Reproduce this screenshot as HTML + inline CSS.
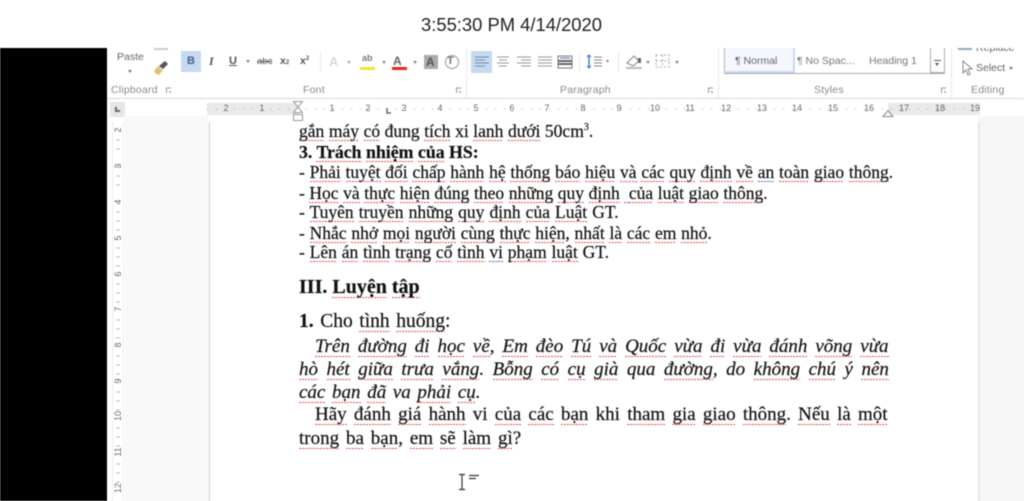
<!DOCTYPE html>
<html lang="vi"><head><meta charset="utf-8"><title>Screen</title>
<style>
html,body{margin:0;padding:0;width:1024px;height:501px;overflow:hidden;background:#fff}
#w{position:relative;width:1024px;height:501px;overflow:hidden;background:#fff;filter:blur(.5px)}
#w div,#w span.a,#w svg{position:absolute}
.s{font-family:"Liberation Sans",sans-serif;white-space:nowrap;color:#666}
.l{font-family:"Liberation Sans",sans-serif;font-size:10.5px;color:#8a8a8a;white-space:nowrap;letter-spacing:.2px}
.t{font-family:"Liberation Serif",serif;font-size:17.5px;line-height:20px;color:#111;white-space:nowrap;left:299px;-webkit-text-stroke:.2px #111}
.t u{text-decoration:none;background:repeating-linear-gradient(90deg,#e2504e 0 2px,transparent 2px 3px) 0 100%/100% 1px no-repeat}
.t u.b{background:repeating-linear-gradient(90deg,#4a6fd0 0 2px,transparent 2px 3px) 0 100%/100% 1px no-repeat}
.r{font-family:"Liberation Sans",sans-serif;font-size:9px;color:#666;width:16px;text-align:center;top:103px}
.v{font-family:"Liberation Sans",sans-serif;font-size:9px;color:#666;left:110px;width:16px;text-align:center;transform:rotate(-90deg)}
.sep{width:1px;background:#e8e8e8}
</style></head><body><div id="w">
<div style="left:421px;top:14px;font:18.4px 'Liberation Sans',sans-serif;color:#222;white-space:nowrap">3:55:30 PM 4/14/2020</div>

<div style="left:0;top:48px;width:107px;height:453px;background:#000"></div>
<div style="left:125px;top:116px;width:84px;height:385px;background:#f9f8f9"></div>
<div style="left:209px;top:122px;width:1px;height:379px;background:#cfcfcf"></div>
<div style="left:978px;top:116px;width:46px;height:385px;background:#f7f7f7"></div>
<div style="left:978px;top:122px;width:2px;height:379px;background:#e6e6e6"></div>

<!-- ribbon -->
<div class="s" style="left:117px;top:51px;font-size:10.5px">Paste</div>
<div style="left:128px;top:70px;width:0;height:0;border:2px solid transparent;border-top:3px solid #777"></div>
<div style="left:154px;top:48px;width:14px;height:2px;background:#ccc"></div>
<svg style="left:153px;top:60px" width="16" height="15" viewBox="0 0 16 15"><path d="M1 11 L5 6 L10 10 L6 15 L3 14Z" fill="#dfc078"/><path d="M6 6 L12 1 L15 4 L10 9Z" fill="#555"/></svg>
<div style="left:181px;top:51px;width:20px;height:21px;background:#c5d9f1"></div>
<div class="s" style="left:187px;top:55px;font:bold 11px 'Liberation Sans',sans-serif;color:#44618a">B</div>
<div class="s" style="left:209px;top:54px;font:italic bold 12px 'Liberation Serif',serif;color:#555">I</div>
<div class="s" style="left:229px;top:55px;font:bold 11px 'Liberation Sans',sans-serif;color:#555;text-decoration:underline">U</div>
<div style="left:246px;top:60px;width:0;height:0;border:2px solid transparent;border-top:3px solid #888"></div>
<div class="s" style="left:257px;top:56px;font-size:9.5px;color:#555;text-decoration:line-through">abc</div>
<div class="s" style="left:280px;top:55px;font:bold 10.5px 'Liberation Sans',sans-serif;color:#555">x<span style="font-size:6px">2</span></div>
<div class="s" style="left:300px;top:55px;font:bold 10.5px 'Liberation Sans',sans-serif;color:#555">x<span style="font-size:6px;vertical-align:4px">2</span></div>
<div class="sep" style="left:320px;top:52px;height:20px"></div>
<div class="s" style="left:329px;top:54px;font:bold 13px 'Liberation Sans',sans-serif;color:#d8d8d8">A</div>
<div style="left:347px;top:61px;width:0;height:0;border:2px solid transparent;border-top:3px solid #aaa"></div>
<div class="s" style="left:362px;top:53px;font:bold 9px 'Liberation Sans',sans-serif;color:#777">ab</div>
<div style="left:360px;top:67px;width:15px;height:3px;background:#f2e33a"></div>
<div style="left:382px;top:61px;width:0;height:0;border:2px solid transparent;border-top:3px solid #888"></div>
<div class="s" style="left:393px;top:54px;font:bold 12px 'Liberation Sans',sans-serif;color:#666">A</div>
<div style="left:392px;top:67px;width:15px;height:3px;background:#e02a20"></div>
<div style="left:413px;top:61px;width:0;height:0;border:2px solid transparent;border-top:3px solid #888"></div>
<div style="left:424px;top:55px;width:14px;height:14px;background:#aaa"></div>
<div class="s" style="left:426px;top:55px;font:bold 12px 'Liberation Sans',sans-serif;color:#555">A</div>
<div style="left:445px;top:55px;width:12px;height:12px;border:1px solid #999;border-radius:50%"></div>
<div class="s" style="left:447px;top:55px;font:bold 11px 'Liberation Sans',sans-serif;color:#777">T</div>

<div class="sep" style="left:466px;top:48px;height:50px"></div>
<div style="left:471px;top:51px;width:21px;height:22px;background:#c5d9f1"></div>
<svg style="left:474px;top:55px" width="108" height="14" viewBox="0 0 108 14" stroke="#999" fill="none"><path d="M1 2H15M1 5H11M1 8H15M1 11H11" stroke="#7d8ca3"/><path d="M23 2H35M25 5H33M23 8H35M25 11H33"/><path d="M43 2H57M47 5H57M43 8H57M47 11H57"/><path d="M64 2H78M64 5H78M64 8H78M64 11H78"/><path d="M84 1H98V13H84Z" stroke="#777"/><path d="M84 6H98M84 9H98" stroke="#666" stroke-width="2"/><path d="M86 3H96" stroke="#3a75c4"/></svg>
<div class="sep" style="left:579px;top:52px;height:20px"></div>
<svg style="left:586px;top:54px" width="28" height="16" viewBox="0 0 28 16" fill="none"><path d="M3 1V14" stroke="#3f7fc9" stroke-width="1.5"/><path d="M1 3L3 1L5 3M1 12L3 14L5 12" stroke="#3f7fc9"/><path d="M8 3H16M8 6H16M8 9H16M8 12H16" stroke="#888"/><path d="M20 6L23 6L21.500 9Z" fill="#888"/></svg>
<div class="sep" style="left:618px;top:52px;height:20px"></div>
<svg style="left:625px;top:53px" width="60" height="18" viewBox="0 0 60 18" fill="none"><path d="M2 10L9 3L14 8L8 13Z" stroke="#888"/><path d="M13 5h3v5h-3z" fill="#666"/><path d="M1 15H17" stroke="#bbb" stroke-width="2"/><path d="M21 8L25 8L23 11Z" fill="#888"/><path d="M31 2H44V14H31ZM31 8H44M37.500 2V14" stroke="#aaa" stroke-dasharray="2 2"/><path d="M50 8L54 8L52 11Z" fill="#888"/></svg>
<div class="sep" style="left:718px;top:48px;height:50px"></div>

<div style="left:724px;top:48px;width:220px;height:25px;border-bottom:1px solid #aaa;border-left:1px solid #aab"></div>
<div style="left:726px;top:48px;width:67px;height:23px;border-right:2px solid #c9d9f2;border-bottom:2px solid #c9d9f2;background:#f4f7fd"></div>
<div class="s" style="left:735px;top:55px;font-size:10.5px;color:#666">¶ Normal</div>
<div class="s" style="left:797px;top:55px;font-size:10.5px;color:#777">¶ No Spac...</div>
<div class="s" style="left:869px;top:55px;font-size:10.5px;color:#777">Heading 1</div>
<div style="left:930px;top:48px;width:15px;height:25px;border:1px solid #aaa;border-top:0;box-sizing:border-box"></div>
<div style="left:934px;top:60px;width:7px;height:1px;background:#555"></div>
<div style="left:935px;top:63px;width:0;height:0;border:2.500px solid transparent;border-top:3px solid #555"></div>
<div class="sep" style="left:951px;top:48px;height:50px"></div>

<div style="left:976px;top:48px;width:48px;height:5px;overflow:hidden"><div class="s" style="left:0;top:-6px;font-size:10.5px">Replace</div></div>
<div style="left:958px;top:48px;width:14px;height:2px;background:#8ea6c9"></div>
<svg style="left:961px;top:60px" width="13" height="16" viewBox="0 0 13 16"><path d="M2 1V13L5 10L7 15L9 14L7 9L11 9Z" fill="#fff" stroke="#888"/></svg>
<div class="s" style="left:976px;top:62px;font-size:10.5px;color:#666">Select</div>
<div style="left:1009px;top:67px;width:0;height:0;border:2px solid transparent;border-top:3px solid #777"></div>

<div class="l" style="left:111px;top:84px">Clipboard</div>
<div class="l" style="left:303px;top:84px">Font</div>
<div class="l" style="left:560px;top:84px">Paragraph</div>
<div class="l" style="left:814px;top:84px">Styles</div>
<div class="l" style="left:971px;top:84px">Editing</div>
<svg style="left:0;top:0" width="1024" height="100" fill="none" stroke="#999"><path d="M166.500 93V88H171M169 91L171 93M456.500 93V88H461M459 91L461 93M708.500 93V88H713M711 91L713 93M941.500 93V88H946M944 91L946 93"/></svg>
<div style="left:107px;top:98px;width:917px;height:1px;background:#d8d8d8"></div>

<!-- horizontal ruler -->
<div style="left:110px;top:102px;width:15px;height:15px;background:#e6e6e6"></div>
<div style="left:115px;top:107px;width:2px;height:5px;background:#666"></div><div style="left:115px;top:110px;width:5px;height:2px;background:#666"></div>
<div style="left:207px;top:103px;width:91px;height:12px;background:#e9e9e9"></div>
<div style="left:888px;top:103px;width:92px;height:12px;background:#e9e9e9"></div>
<div class="r" style="left:218px">2</div><div class="r" style="left:254px">1</div>
<div class="r" style="left:324px">1</div><div class="r" style="left:360px">2</div><div class="r" style="left:396px">3</div><div class="r" style="left:432px">4</div><div class="r" style="left:468px">5</div><div class="r" style="left:504px">6</div><div class="r" style="left:539px">7</div><div class="r" style="left:575px">8</div><div class="r" style="left:611px">9</div><div class="r" style="left:647px">10</div><div class="r" style="left:682px">11</div><div class="r" style="left:718px">12</div><div class="r" style="left:754px">13</div><div class="r" style="left:789px">14</div><div class="r" style="left:825px">15</div><div class="r" style="left:861px">16</div><div class="r" style="left:896px">17</div><div class="r" style="left:932px">18</div><div class="r" style="left:967px">19</div>
<svg style="left:0;top:98px" width="1024" height="26" fill="none"><path d="M207 11H980" stroke="#aaa" stroke-dasharray="1 8"/><path d="M293.500 3.500H302.500L298 9L302.500 14.500H293.500L298 9Z" fill="#fff" stroke="#999"/><rect x="293.500" y="16.500" width="9" height="6" fill="#fff" stroke="#999"/><path d="M883 18.500L888 12.500L893 18.500Z" fill="#fff" stroke="#888"/><path d="M387 10V15H391" stroke="#666" stroke-width="1.500"/></svg>

<!-- vertical ruler -->
<div style="left:112px;top:122px;width:1px;height:379px;background:#ececec"></div>
<div style="left:123px;top:122px;width:1px;height:379px;background:#ececec"></div>
<div class="v" style="top:125px">2</div><div class="v" style="top:161px">3</div><div class="v" style="top:197px">4</div><div class="v" style="top:233px">5</div><div class="v" style="top:269px">6</div><div class="v" style="top:304px">7</div><div class="v" style="top:340px">8</div><div class="v" style="top:376px">9</div><div class="v" style="top:411px">10</div><div class="v" style="top:447px">11</div><div class="v" style="top:483px">12</div>
<svg style="left:112px;top:122px" width="12" height="379" stroke="#bbb"><path d="M4 18H8M4 27H8M4 45H8M4 54H8M4 63H8M4 90H8M4 99H8M4 108H8M4 126H8M4 135H8M4 144H8M4 162H8M4 171H8M4 180H8M4 198H8M4 207H8M4 216H8M4 234H8M4 243H8M4 252H8M4 270H8M4 279H8M4 288H8M4 306H8M4 315H8M4 324H8M4 342H8M4 351H8M4 360H8"/></svg>

<!-- document -->
<div class="t" style="top:121px;word-spacing:.2px"><u>gắn</u> <u>máy</u> <u>có</u> đung <u>tích</u> xi <u>lanh</u> <u>dưới</u> 50cm<sup style="font-size:10px;line-height:0">3</sup>.</div>
<div class="t" style="top:142px;font-weight:bold;font-size:17.8px">3. <u>Trách</u> <u>nhiệm</u> <u>của</u> HS:</div>
<div class="t" style="top:162px;word-spacing:.4px">- <u>Phải</u> <u>tuyệt</u> <u>đối</u> <u>chấp</u> <u>hành</u> <u>hệ</u> <u>thống</u> <u>báo</u> <u>hiệu</u> <u>và</u> <u>các</u> <u>quy</u> <u>định</u> <u>về</u> <u class="b">an</u> <u>toàn</u> <u>giao</u> <u>thông</u>.</div>
<div class="t" style="top:183px;word-spacing:.2px">- <u>Học</u> <u>và</u> <u>thực</u> <u>hiện</u> <u>đúng</u> <u>theo</u> <u>những</u> <u>quy</u> <u>định</u> <u class="b">&nbsp;</u><u>của</u> <u>luật</u> <u>giao</u> <u>thông</u>.</div>
<div class="t" style="top:202px;word-spacing:.7px">- <u>Tuyên</u> <u>truyền</u> <u>những</u> <u>quy</u> <u>định</u> <u>của</u> <u>Luật</u> GT.</div>
<div class="t" style="top:223px;word-spacing:.4px">- <u>Nhắc</u> <u>nhở</u> <u>mọi</u> <u>người</u> <u>cùng</u> <u>thực</u> <u>hiện</u>, <u>nhất</u> <u>là</u> <u>các</u> <u>em</u> <u>nhỏ</u>.</div>
<div class="t" style="top:242px;word-spacing:.45px">- <u>Lên</u> <u>án</u> <u>tình</u> <u>trạng</u> <u>cố</u> <u>tình</u> <u class="b">vi</u> <u>phạm</u> <u>luật</u> GT.</div>
<div class="t" style="top:277px;font-weight:bold;font-size:20px">III. <u>Luyện</u> <u>tập</u></div>
<div class="t" style="top:312px;font-size:19.5px;word-spacing:1.7px"><b>1.</b> Cho <u>tình</u> <u>huống</u>:</div>
<div class="t" style="top:337px;left:315px;font-style:italic;font-size:19px;word-spacing:3.2px"><u>Trên</u> <u>đường</u> <u>đi</u> <u>học</u> <u>về</u>, <u>Em</u> <u>đèo</u> <u>Tú</u> <u>và</u> <u>Quốc</u> <u>vừa</u> <u>đi</u> <u>vừa</u> <u>đánh</u> <u>võng</u> <u>vừa</u></div>
<div class="t" style="top:360px;font-style:italic;font-size:19px;word-spacing:3.75px"><u>hò</u> <u>hét</u> <u>giữa</u> <u>trưa</u> <u>vắng</u>. <u>Bỗng</u> <u>có</u> <u>cụ</u> <u>già</u> qua <u>đường</u>, do <u>không</u> <u>chú</u> ý <u>nên</u></div>
<div class="t" style="top:383px;font-style:italic;font-size:19px;word-spacing:1.9px"><u>các</u> <u>bạn</u> <u>đã</u> va <u>phải</u> <u>cụ</u>.</div>
<div class="t" style="top:405px;left:315px;font-size:19px;word-spacing:2.5px"><u>Hãy</u> <u>đánh</u> <u>giá</u> <u>hành</u> vi <u>của</u> <u>các</u> <u>bạn</u> khi <u>tham</u> <u>gia</u> <u>giao</u> <u>thông</u>. <u>Nếu</u> <u>là</u> <u>một</u></div>
<div class="t" style="top:429px;font-size:19px;word-spacing:2.1px"><u>trong</u> <u>ba</u> <u>bạn</u>, <u>em</u> <u>sẽ</u> <u>làm</u> <u>gì</u>?</div>

<svg style="left:456px;top:472px" width="26" height="20" fill="none" stroke="#333"><path d="M3 2.500H9M3 17.500H9M6 2.500V17.500" stroke-width="1.200"/><path d="M13 3.500H23M13 6.500H20" stroke-width="1.200"/></svg>
</div></body></html>
